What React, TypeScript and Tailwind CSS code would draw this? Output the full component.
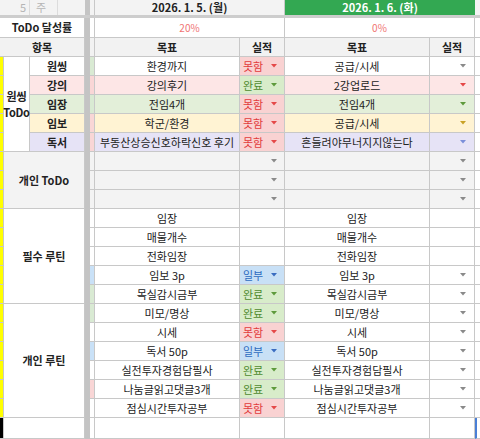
import React from 'react';

type Status = 'bad' | 'done' | 'part' | 'tri' | 'none';

const STATUS: Record<'bad' | 'done' | 'part', { bg: string; text: string; tri: string; label: string }> = {
  bad: { bg: 'bg-[#f9d2d2]', text: 'text-[#e23b3b]', tri: '#e54848', label: '못함' },
  done: { bg: 'bg-[#d8ecca]', text: 'text-[#4f8a2f]', tri: '#5e9a3c', label: '완료' },
  part: { bg: 'bg-[#c8e0f6]', text: 'text-[#2e6cc0]', tri: '#3a6cc0', label: '일부' },
};

const GRAY = '#8a8a8a';

interface Row {
  mark: string;
  bg: string;
  g1: string;
  s1: Status;
  g2: string;
  t2: string | null;
}

const WHITE = 'bg-white';
const GREY = 'bg-[#f3f3f3]';
const M_GREEN = 'bg-[#d9ead3]';
const M_PINK = 'bg-[#f9d6d6]';
const M_BLUE = 'bg-[#c9e1f7]';

const rows: Row[] = [
  { mark: M_GREEN, bg: WHITE, g1: '환경까지', s1: 'bad', g2: '공급/시세', t2: GRAY },
  { mark: M_PINK, bg: 'bg-[#fde6e6]', g1: '강의후기', s1: 'done', g2: '2강업로드', t2: '#e54848' },
  { mark: M_GREEN, bg: 'bg-[#e3efd9]', g1: '전임4개', s1: 'bad', g2: '전임4개', t2: '#5e9a3c' },
  { mark: M_PINK, bg: 'bg-[#fff3d3]', g1: '학군/환경', s1: 'bad', g2: '공급/시세', t2: '#c9a227' },
  { mark: M_PINK, bg: 'bg-[#e6e3f6]', g1: '부동산상승신호하락신호 후기', s1: 'bad', g2: '흔들려야무너지지않는다', t2: '#7b8fd9' },
  { mark: GREY, bg: GREY, g1: '', s1: 'tri', g2: '', t2: GRAY },
  { mark: GREY, bg: GREY, g1: '', s1: 'tri', g2: '', t2: GRAY },
  { mark: GREY, bg: GREY, g1: '', s1: 'tri', g2: '', t2: GRAY },
  { mark: WHITE, bg: WHITE, g1: '임장', s1: 'none', g2: '임장', t2: null },
  { mark: WHITE, bg: WHITE, g1: '매물개수', s1: 'none', g2: '매물개수', t2: null },
  { mark: WHITE, bg: WHITE, g1: '전화임장', s1: 'none', g2: '전화임장', t2: null },
  { mark: M_BLUE, bg: WHITE, g1: '임보 3p', s1: 'part', g2: '임보 3p', t2: GRAY },
  { mark: M_GREEN, bg: WHITE, g1: '목실감시금부', s1: 'done', g2: '목실감시금부', t2: GRAY },
  { mark: M_GREEN, bg: WHITE, g1: '미모/명상', s1: 'done', g2: '미모/명상', t2: GRAY },
  { mark: WHITE, bg: WHITE, g1: '시세', s1: 'bad', g2: '시세', t2: GRAY },
  { mark: M_BLUE, bg: WHITE, g1: '독서 50p', s1: 'part', g2: '독서 50p', t2: GRAY },
  { mark: WHITE, bg: WHITE, g1: '실전투자경험담필사', s1: 'done', g2: '실전투자경험담필사', t2: GRAY },
  { mark: M_PINK, bg: WHITE, g1: '나눔글읽고댓글3개', s1: 'done', g2: '나눔글읽고댓글3개', t2: GRAY },
  { mark: WHITE, bg: WHITE, g1: '점심시간투자공부', s1: 'bad', g2: '점심시간투자공부', t2: GRAY },
];

function Tri({ color }: { color: string }) {
  return (
    <svg width="6" height="4" viewBox="0 0 6 4" className="shrink-0">
      <path d="M0 0H6L3 3.5Z" fill={color} />
    </svg>
  );
}

function Divider() {
  return <div className="w-[5px] shrink-0 self-stretch bg-[#c4c4c4]" />;
}

function StatusCell({ s, bg }: { s: Status; bg: string }) {
  if (s === 'bad' || s === 'done' || s === 'part') {
    const st = STATUS[s];
    return (
      <div className={`w-[45px] h-full border-r border-b border-[#c8c8c8] flex items-center justify-between pl-[3px] pr-[7px] ${st.bg} ${st.text}`}>
        <span>{st.label}</span>
        <Tri color={st.tri} />
      </div>
    );
  }
  return (
    <div className={`w-[45px] h-full border-r border-b border-[#c8c8c8] flex items-center justify-end pr-[7px] ${bg}`}>
      {s === 'tri' ? <Tri color={GRAY} /> : null}
    </div>
  );
}

function RightRow({ r, last }: { r: Row; last?: boolean }) {
  return (
    <div className={`flex ${last ? 'h-[21px]' : 'h-[19px]'}`}>
      <div className={`w-[5px] h-full border-r border-b border-[#c8c8c8] ${r.mark}`} />
      <div className={`w-[145px] h-full border-r border-b border-[#c8c8c8] flex items-center justify-center overflow-hidden whitespace-nowrap ${r.bg}`}>
        {r.g1}
      </div>
      <StatusCell s={r.s1} bg={r.bg} />
      <div className={`w-[145px] h-full border-r border-b border-[#c8c8c8] flex items-center justify-center overflow-hidden whitespace-nowrap ${r.bg}`}>
        {r.g2}
      </div>
      <div className={`w-[45px] h-full border-r border-b border-[#c8c8c8] flex items-center justify-end pr-[8px] ${r.bg}`}>
        {r.t2 ? <Tri color={r.t2} /> : null}
      </div>
      <div className={`w-[5px] h-full border-b border-[#c8c8c8] bg-white ${last ? 'border-l-2 border-l-[#4a7fd6]' : ''}`} />
    </div>
  );
}

function YellowCol({ n, black }: { n: number; black?: boolean }) {
  return (
    <div className="flex flex-col w-[4px] shrink-0">
      {Array.from({ length: n }).map((_, i) => (
        <div
          key={i}
          className={`${black ? 'h-[21px] bg-black' : 'h-[19px] bg-[#ffff00]'} border-r border-b border-[#c8c8c8]`}
        />
      ))}
    </div>
  );
}

function Group({ n, label, bg }: { n: number; label: string; bg: string }) {
  const h = n === 3 ? 'h-[57px]' : n === 5 ? 'h-[95px]' : 'h-[114px]';
  return (
    <div className="flex">
      <YellowCol n={n} />
      <div className={`w-[81px] ${h} border-r border-b border-[#c8c8c8] flex items-center justify-center font-bold ${bg}`}>
        {label}
      </div>
    </div>
  );
}

const subs = [
  { name: '원씽', bg: 'bg-white' },
  { name: '강의', bg: 'bg-[#fde6e6]' },
  { name: '임장', bg: 'bg-[#e3efd9]' },
  { name: '임보', bg: 'bg-[#fff3d3]' },
  { name: '독서', bg: 'bg-[#e6e3f6]' },
];

export default function App() {
  return (
    <div className="w-[480px] h-[439px] overflow-hidden bg-white text-[#222] text-[11px] leading-none font-[family-name:'Noto_Sans_CJK_KR','Noto_Sans',sans-serif]">
      {/* Row 1 */}
      <div className="flex h-[15px]">
        <div className="flex w-[85px] bg-[#f3f3f3] text-[#b5b5b5]">
          <div className="w-[30px] border-r border-[#dcdcdc] flex items-center justify-end pr-[3px]">5</div>
          <div className="w-[28px] border-r border-[#dcdcdc] flex items-center pl-[6px]">주</div>
          <div className="w-[27px]" />
        </div>
        <Divider />
        <div className="w-[5px] bg-[#f3f3f3] border-r border-[#c8c8c8]" />
        <div className="w-[190px] bg-[#f3f3f3] border-r border-[#c8c8c8] flex items-center justify-center font-bold">
          2026. 1. 5. (월)
        </div>
        <div className="w-[190px] bg-[#33a852] text-white flex items-center justify-center font-bold">
          2026. 1. 6. (화)
        </div>
        <div className="w-[5px] bg-[#f3f3f3]" />
      </div>
      <div className="h-[3px] bg-[#cdcdcd]" />
      {/* Row 2 */}
      <div className="flex h-[20px]">
        <div className="w-[85px] border-r border-b border-[#c8c8c8] flex items-center justify-center font-bold">ToDo 달성률</div>
        <Divider />
        <div className="w-[5px] border-r border-b border-[#c8c8c8]" />
        <div className="w-[190px] border-r border-b border-[#c8c8c8] flex items-center justify-center text-[#f07474] text-[10px]">20%</div>
        <div className="w-[190px] border-r border-b border-[#c8c8c8] flex items-center justify-center text-[#f07474] text-[10px]">0%</div>
        <div className="w-[5px] border-b border-[#c8c8c8]" />
      </div>
      {/* Row 3 */}
      <div className="flex h-[19px] bg-[#f2f2f2] font-bold">
        <div className="w-[85px] border-r border-b border-[#c8c8c8] flex items-center justify-center">항목</div>
        <Divider />
        <div className="w-[5px] border-r border-b border-[#c8c8c8]" />
        <div className="w-[145px] border-r border-b border-[#c8c8c8] flex items-center justify-center">목표</div>
        <div className="w-[45px] border-r border-b border-[#c8c8c8] flex items-center justify-center">실적</div>
        <div className="w-[145px] border-r border-b border-[#c8c8c8] flex items-center justify-center">목표</div>
        <div className="w-[45px] border-r border-b border-[#c8c8c8] flex items-center justify-center">실적</div>
        <div className="w-[5px] border-b border-[#c8c8c8] bg-white" />
      </div>
      {/* Body */}
      <div className="flex">
        <div className="w-[85px] flex flex-col">
          <div className="flex">
            <YellowCol n={5} />
            <div className="w-[26px] h-[95px] border-r border-b border-[#c8c8c8] flex flex-col items-center justify-center font-bold leading-[16px] bg-white">
              <span className="block">원씽</span>
              <span className="block tracking-[-0.3px]">ToDo</span>
            </div>
            <div className="flex flex-col w-[55px]">
              {subs.map((s) => (
                <div key={s.name} className={`h-[19px] border-r border-b border-[#c8c8c8] flex items-center justify-center font-bold ${s.bg}`}>
                  {s.name}
                </div>
              ))}
            </div>
          </div>
          <Group n={3} label="개인 ToDo" bg="bg-[#f3f3f3]" />
          <Group n={5} label="필수 루틴" bg="bg-white" />
          <Group n={6} label="개인 루틴" bg="bg-white" />
          <div className="flex">
            <YellowCol n={1} black />
            <div className="w-[81px] h-[21px] border-r border-b border-[#c8c8c8] bg-white" />
          </div>
        </div>
        <Divider />
        <div className="w-[390px] flex flex-col">
          {rows.map((r, i) => (
            <RightRow key={i} r={r} />
          ))}
          <RightRow r={{ mark: WHITE, bg: WHITE, g1: '', s1: 'none', g2: '', t2: null }} last />
        </div>
      </div>
    </div>
  );
}
